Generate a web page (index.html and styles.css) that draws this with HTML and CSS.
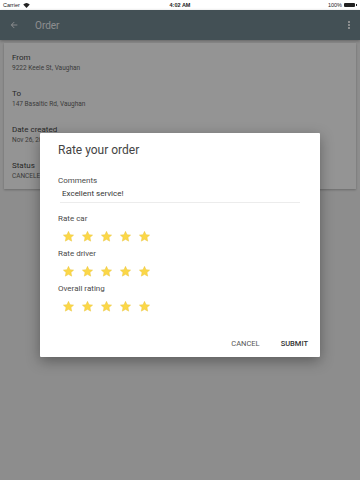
FILE: index.html
```html
<!DOCTYPE html>
<html lang="en">
<head>
    <meta charset="UTF-8">
    <meta name="viewport" content="width=device-width, initial-scale=1.0">
    <title>Order</title>
    <link rel="stylesheet" href="styles.css">
</head>
<body>
    <div class="status-bar">
        <div class="status-left">
            <span>Carrier</span>
            <svg class="wifi" width="7" height="5" viewBox="0 0 14 10">
                <path d="M7 10 L0.5 3.2 A9.5 9.5 0 0 1 13.5 3.2 Z" fill="#222"/>
            </svg>
        </div>
        <div class="status-time">4:02 AM</div>
        <div class="status-right">
            <span>100%</span>
            <span class="battery"><span class="battery-cap"></span></span>
        </div>
    </div>

    <div class="page">
        <div class="toolbar">
            <svg class="back" width="10" height="10" viewBox="0 0 24 24">
                <path d="M20 11H7.83l5.59-5.59L12 4l-8 8 8 8 1.41-1.41L7.83 13H20v-2z" fill="#ffffff"/>
            </svg>
            <div class="toolbar-title">Order</div>
            <div class="kebab">
                <span></span><span></span><span></span>
            </div>
        </div>

        <div class="card">
            <div class="field">
                <div class="field-label">From</div>
                <div class="field-value">9222 Keele St, Vaughan</div>
            </div>
            <div class="field">
                <div class="field-label">To</div>
                <div class="field-value">147 Basaltic Rd, Vaughan</div>
            </div>
            <div class="field">
                <div class="field-label">Date created</div>
                <div class="field-value">Nov 26, 2016</div>
            </div>
            <div class="field">
                <div class="field-label">Status</div>
                <div class="field-value">CANCELED</div>
            </div>
        </div>

        <div class="scrim">
            <div class="dialog">
                <div class="dialog-title">Rate your order</div>

                <div class="label comments-label">Comments</div>
                <div class="comment-input">Excellent service!</div>

                <div class="label first-rating">Rate car</div>
                <div class="stars" data-rating="5"></div>

                <div class="label">Rate driver</div>
                <div class="stars" data-rating="5"></div>

                <div class="label">Overall rating</div>
                <div class="stars" data-rating="5"></div>

                <div class="actions">
                    <button class="action-btn">Cancel</button>
                    <button class="action-btn submit">Submit</button>
                </div>
            </div>
        </div>
    </div>

    <script>
        // estrelas desenhadas a partir do rating
        const starPath = 'M12 2.5l2.9 6.1 6.6.8-4.9 4.6 1.3 6.6L12 17.3l-5.9 3.3 1.3-6.6-4.9-4.6 6.6-.8z';
        document.querySelectorAll('.stars').forEach(row => {
            const rating = parseInt(row.dataset.rating, 10);
            for (let i = 0; i < 5; i++) {
                const fill = i < rating ? '#fbd748' : '#e0e0e0';
                row.innerHTML += `<svg class="star" width="13" height="13" viewBox="0 0 24 24"><path d="${starPath}" fill="${fill}" stroke="#e8c23a" stroke-width="0.8" stroke-linejoin="round"/></svg>`;
            }
        });
    </script>
</body>
</html>
```

FILE: styles.css
```css
body {
    margin: 0;
    height: 480px;
    overflow: hidden;
    font-family: Roboto, "Liberation Sans", sans-serif;
    background-color: #ffffff;
    display: flex;
    flex-direction: column;
}

/* barra de status do iOS */
.status-bar {
    height: 10px;
    background-color: #ffffff;
    display: flex;
    align-items: center;
    justify-content: space-between;
    padding: 0 3px;
    font-family: "Liberation Sans", sans-serif;
    font-size: 5.5px;
    color: #222;
}

.status-left, .status-right {
    display: flex;
    align-items: center;
    gap: 3px;
    width: 60px;
}

.status-right {
    justify-content: flex-end;
    gap: 2px;
}

.status-time {
    font-weight: bold;
}

.battery {
    width: 11px;
    height: 4px;
    background-color: #222;
    border-radius: 1px;
    position: relative;
    margin-right: 2px;
}

.battery-cap {
    position: absolute;
    right: -2px;
    top: 1px;
    width: 1px;
    height: 2px;
    background-color: #222;
}

.page {
    flex: 1;
    position: relative;
    background-color: #ebebeb;
}

.toolbar {
    height: 30px;
    background-color: #70858e;
    display: flex;
    align-items: center;
    padding: 0 10px 0 9px;
    box-shadow: 0 1px 3px rgba(0, 0, 0, 0.3);
}

.back {
    opacity: 0.8;
}

.toolbar-title {
    margin-left: 16px;
    font-size: 10px;
    color: #ffffff;
    opacity: 0.85;
    flex: 1;
}

.kebab {
    display: flex;
    flex-direction: column;
    gap: 1px;
}

.kebab span {
    width: 2px;
    height: 2px;
    background-color: #ffffff;
    opacity: 0.85;
}

.card {
    margin: 3px 4px 0;
    background-color: #f7f7f7;
    box-shadow: 0 1px 2px rgba(0, 0, 0, 0.25);
    padding: 9px 8px 8px;
    display: flex;
    flex-direction: column;
    gap: 15px;
}

.field-label {
    font-size: 8px;
    line-height: 11px;
    color: #444;
}

.field-value {
    font-size: 6.5px;
    line-height: 10px;
    color: #666;
}

/* fundo escuro do dialogo */
.scrim {
    position: absolute;
    inset: 0;
    background-color: rgba(0, 0, 0, 0.4);
    display: flex;
    flex-direction: column;
    align-items: center;
    padding-top: 123px;
}

.dialog {
    width: 280px;
    box-sizing: border-box;
    background-color: #ffffff;
    box-shadow: 0 4px 14px rgba(0, 0, 0, 0.35);
    border-radius: 1px;
    padding: 9px 12px 8px 18px;
}

.dialog-title {
    font-size: 12px;
    line-height: 16px;
    color: #444;
}

.label {
    font-size: 8px;
    line-height: 10px;
    color: #4a4a4a;
    margin-top: 6px;
}

.comments-label {
    margin-top: 18px;
}

.first-rating {
    margin-top: 11px;
}

.comment-input {
    margin-top: 3px;
    margin-left: 2px;
    margin-right: 8px;
    padding: 0 0 3px 2px;
    font-size: 8px;
    line-height: 10px;
    color: #333;
    border-bottom: 1px solid #ececec;
}

.label + .stars {
    margin-top: 6px;
}

.stars {
    display: flex;
    gap: 6px;
    padding-left: 4px;
    margin-bottom: 1px;
}

.actions {
    display: flex;
    justify-content: flex-end;
    gap: 21px;
    margin-top: 25px;
}

.action-btn {
    background: none;
    border: none;
    padding: 0;
    font-family: Roboto, "Liberation Sans", sans-serif;
    font-size: 7.5px;
    line-height: 11px;
    text-transform: uppercase;
    color: #555;
    cursor: pointer;
}

.submit {
    font-weight: 500;
    color: #333;
}
```
